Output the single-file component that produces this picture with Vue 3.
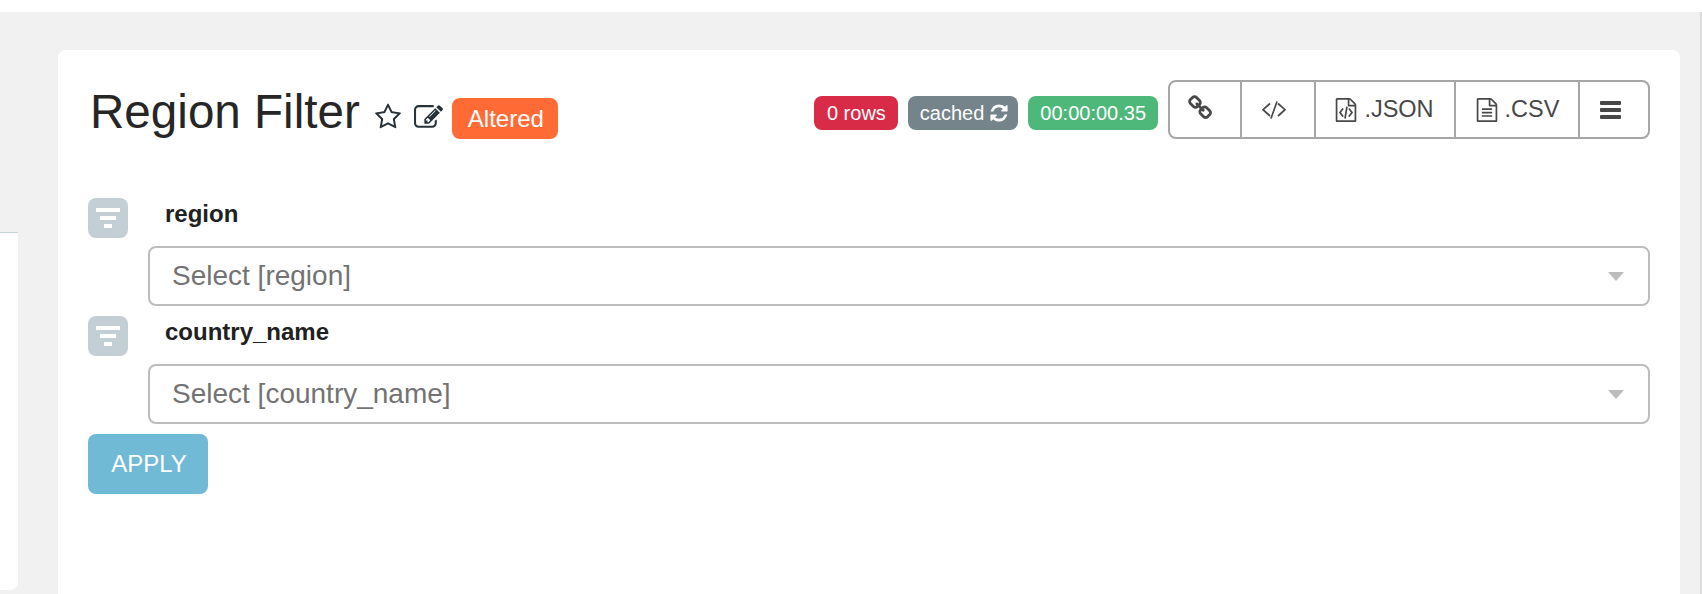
<script setup>
const filters = [
  { name: 'region', placeholder: 'Select [region]' },
  { name: 'country_name', placeholder: 'Select [country_name]' },
]
const icons = {
  star: 'M1201 1004l306-297-422-62-189-382-189 382-422 62 306 297-73 421 378-199 377 199zm527-357q0 22-26 48l-363 354 86 500q1 7 1 20 0 50-41 50-19 0-40-12l-449-236-449 236q-22 12-40 12-21 0-31.5-14.5t-10.5-35.5q0-6 2-20l86-500-364-354q-25-27-25-48 0-37 56-46l502-73 225-455q19-41 49-41t49 41l225 455 502 73q56 9 56 46z',
  edit: 'M888 1184l116-116-152-152-116 116v56h96v96h56zm440-720q-16-16-33 1l-350 350q-17 17-1 33t33-1l350-350q17-17 1-33zm80 594v190q0 119-84.5 203.5t-203.5 84.5h-832q-119 0-203.5-84.5t-84.5-203.5v-832q0-119 84.5-203.5t203.5-84.5h832q63 0 117 25 15 7 18 23 3 17-9 29l-49 49q-14 14-32 8-23-6-45-6h-832q-66 0-113 47t-47 113v832q0 66 47 113t113 47h832q66 0 113-47t47-113v-126q0-13 9-22l64-64q15-15 35-7t20 29zm-96-738l288 288-672 672h-288v-288zm444 132l-92 92-288-288 92-92q28-28 68-28t68 28l152 152q28 28 28 68t-28 68z',
  refresh: 'M1639 1056q0 5-1 7-64 268-268 434.5t-478 166.5q-146 0-282.5-55t-243.5-157l-129 129q-19 19-45 19t-45-19-19-45v-448q0-26 19-45t45-19h448q26 0 45 19t19 45-19 45l-137 137q71 66 161 102t187 36q134 0 250-65t186-179q11-17 53-117 8-23 30-23h192q13 0 22.5 9.5t9.5 22.5zm25-800v448q0 26-19 45t-45 19h-448q-26 0-45-19t-19-45 19-45l138-138q-148-137-349-137-134 0-250 65t-186 179q-11 17-53 117-8 23-30 23h-199q-13 0-22.5-9.5t-9.5-22.5v-7q65-268 270-434.5t480-166.5q146 0 284 55.5t245 156.5l130-129q19-19 45-19t45 19 19 45z',
  link: 'M1456 1216q0-40-28-68l-208-208q-28-28-68-28-42 0-72 32 3 3 19 18.5t21.5 21.5 15 19 13 25.5 3.5 27.5q0 40-28 68t-68 28q-15 0-27.5-3.5t-25.5-13-19-15-21.5-21.5-18.5-19q-33 31-33 73 0 40 28 68l206 207q27 27 68 27 40 0 68-26l147-146q28-28 28-67zm-703-705q0-40-28-68l-206-207q-28-28-68-28-39 0-68 27l-147 146q-28 28-28 67 0 40 28 68l208 208q27 27 68 27 42 0 72-31-3-3-19-18.5t-21.5-21.5-15-19-13-25.5-3.5-27.5q0-40 28-68t68-28q15 0 27.5 3.5t25.5 13 19 15 21.5 21.5 18.5 19q33-31 33-73zm895 705q0 120-85 203l-147 146q-83 83-203 83-121 0-204-85l-206-207q-83-83-83-203 0-123 88-209l-88-88q-86 88-208 88-120 0-204-84l-208-208q-84-84-84-204t85-203l147-146q83-83 203-83 121 0 204 85l206 207q83 83 83 203 0 123-88 209l88 88q86-88 208-88 120 0 204 84l208 208q84 84 84 204z',
  fileCode: 'M1596 380q28 28 48 76t20 88v1152q0 40-28 68t-68 28h-1344q-40 0-68-28t-28-68v-1600q0-40 28-68t68-28h896q40 0 88 20t76 48zm-444-244v376h376q-10-29-22-41l-313-313q-12-12-41-22zm384 1528v-1024h-416q-40 0-68-28t-28-68v-416h-768v1536h1280zm-928-896q8-11 21-12.5t24 6.5l51 38q11 8 12.5 21t-6.5 24l-182 243 182 243q8 11 6.5 24t-12.5 21l-51 38q-11 8-24 6.5t-21-12.5l-226-301q-14-19 0-38zm802 301q14 19 0 38l-226 301q-8 11-21 12.5t-24-6.5l-51-38q-11-8-12.5-21t6.5-24l182-243-182-243q-8-11-6.5-24t12.5-21l51-38q11-8 24-6.5t21 12.5zm-620 461q-13-2-20.5-13t-5.5-24l138-831q2-13 13-20.5t24-5.5l63 10q13 2 20.5 13t5.5 24l-138 831q-2 13-13 20.5t-24 5.5z',
  fileText: 'M1596 380q28 28 48 76t20 88v1152q0 40-28 68t-68 28h-1344q-40 0-68-28t-28-68v-1600q0-40 28-68t68-28h896q40 0 88 20t76 48zm-444-244v376h376q-10-29-22-41l-313-313q-12-12-41-22zm384 1528v-1024h-416q-40 0-68-28t-28-68v-416h-768v1536h1280zm-1024-864q0-14 9-23t23-9h704q14 0 23 9t9 23v64q0 14-9 23t-23 9h-704q-14 0-23-9t-9-23v-64zm736 224q14 0 23 9t9 23v64q0 14-9 23t-23 9h-704q-14 0-23-9t-9-23v-64q0-14 9-23t23-9h704zm0 256q14 0 23 9t9 23v64q0 14-9 23t-23 9h-704q-14 0-23-9t-9-23v-64q0-14 9-23t23-9h704z',
}
</script>

<template>
  <div class="page">
    <div class="side"></div>
    <main class="card">
      <header class="head">
        <div class="head-left">
          <h1 class="title">Region Filter</h1>
          <svg class="ic-star" viewBox="0 0 1792 1792"><path :d="icons.star" /></svg>
          <svg class="ic-edit" viewBox="0 0 1792 1792"><path :d="icons.edit" /></svg>
          <span class="altered">Altered</span>
        </div>
        <div class="head-right">
          <span class="badge red">0 rows</span>
          <span class="badge grey">cached <svg class="ic-refresh" viewBox="0 0 1792 1792"><path :d="icons.refresh" /></svg></span>
          <span class="badge green">00:00:00.35</span>
          <div class="btns">
            <div class="btn"><svg class="ic-link" viewBox="0 0 1792 1792"><path :d="icons.link" /></svg></div>
            <div class="btn"><svg class="ic-code" viewBox="0 0 24 18"><path d="M8 2.500 1 8.700l7 6.300M16 2.500l7 6.200-7 6.300M15 .5 9 17.500" /></svg></div>
            <div class="btn shift"><svg class="ic-file" viewBox="0 0 1792 1792"><path :d="icons.fileCode" /></svg>.JSON</div>
            <div class="btn"><svg class="ic-file" viewBox="0 0 1792 1792"><path :d="icons.fileText" /></svg>.CSV</div>
            <div class="btn"><span class="bars"><i></i><i></i><i></i></span></div>
          </div>
        </div>
      </header>
      <section class="filters">
        <div v-for="f in filters" :key="f.name" class="row">
          <div class="funnel"><i></i><i></i><i></i></div>
          <div class="field">
            <label class="label">{{ f.name }}</label>
            <div class="select">
              <span>{{ f.placeholder }}</span>
              <b class="caret"></b>
            </div>
          </div>
        </div>
        <button class="apply">APPLY</button>
      </section>
    </main>
  </div>
</template>

<style scoped>
.page {
  height: 582px;
  margin-top: 12px;
  background: #f1f1f1;
  display: flex;
  overflow: hidden;
  border-right: 2px solid #dcdcdc;
  font-family: "Liberation Sans", Arial, sans-serif;
}
.side {
  width: 18px;
  height: 358px;
  margin-top: 220px;
  margin-right: 40px;
  flex: none;
  background: #fff;
  border-top: 1px solid #c4d4d4;
  border-bottom-right-radius: 8px;
  box-sizing: border-box;
}
.card {
  width: 1622px;
  flex: none;
  margin-top: 38px;
  padding: 30px 30px 0;
  box-sizing: border-box;
  background: #fff;
  border-radius: 8px 8px 0 0;
}
.head {
  display: flex;
  justify-content: space-between;
  align-items: flex-start;
  height: 59px;
}
.head-left {
  display: flex;
  align-items: center;
  margin-top: 4px;
}
.title {
  margin: 0 0 4px 2px;
  font-size: 47.6px;
  font-weight: 400;
  line-height: 56px;
  color: #262626;
}
svg path { fill: currentColor; }
.ic-star {
  width: 28px;
  height: 28px;
  margin-left: 14px;
  color: #263238;
  margin-top: 6px;
}
.ic-edit {
  width: 29px;
  height: 29px;
  margin-left: 12px;
  color: #263238;
  margin-top: 6px;
}
.altered {
  margin-left: 9px;
  height: 41px;
  line-height: 41px;
  margin-top: 8px;
  padding: 0 16px;
  box-sizing: border-box;
  width: 106px;
  border-radius: 8px;
  background: #ff6a35;
  color: #fff;
  font-size: 24px;
}
.head-right {
  display: flex;
  align-items: flex-start;
}
.badge {
  height: 34px;
  margin-top: 16px;
  margin-right: 10px;
  padding: 0 12px;
  display: inline-flex;
  align-items: center;
  gap: 5px;
  border-radius: 8px;
  color: #fff;
  font-size: 20px;
  white-space: nowrap;
}
.red { background: #d72b47; padding: 0 12px 0 13px; }
.grey { background: #75838a; padding: 0 9px 0 12px; }
.green { background: #4db87a; }
.ic-refresh { width: 20px; height: 20px; }
.btns {
  width: 482px;
  height: 59px;
  display: grid;
  grid-template-columns: 72px 74px 140px 124px 1fr;
  box-sizing: border-box;
  border: 2px solid #a6a6a6;
  border-radius: 8px;
  color: #484848;
  font-size: 23.5px;
}
.btn {
  display: flex;
  align-items: center;
  justify-content: center;
  gap: 6px;
  border-right: 2px solid #a6a6a6;
}
.btn.shift { padding-right: 2px; }
.btn:last-child { border-right: 0; }
.ic-link { width: 26px; height: 26px; margin: -4px 8px 0 0; }
.ic-code { width: 24px; height: 18px; margin-right: 8px; }
.ic-code path { fill: none; stroke: currentColor; stroke-width: 1.7; }
.ic-file { width: 24px; height: 24px; }
.bars { width: 21px; display: flex; flex-direction: column; gap: 3px; margin-right: 7px; }
.bars i { display: block; height: 4px; border-radius: 1px; background: #484848; }
.filters { margin-top: 0; padding-top: 59px; }
.row { display: flex; margin-bottom: 10px; }
.funnel {
  width: 40px;
  height: 40px;
  flex: none;
  margin-right: 20px;
  border-radius: 8px;
  background: #c3cfd4;
  display: flex;
  flex-direction: column;
  align-items: center;
  padding-top: 10px;
  box-sizing: border-box;
  gap: 4px;
}
.funnel i { display: block; height: 4px; background: #fff; }
.funnel i:nth-child(1) { width: 24px; }
.funnel i:nth-child(2) { width: 16px; }
.funnel i:nth-child(3) { width: 8px; }
.field { flex: 1; min-width: 0; }
.label {
  display: block;
  height: 48px;
  line-height: 32px;
  padding-left: 17px;
  font-size: 24px;
  font-weight: 700;
  color: #212121;
}
.select {
  height: 60px;
  box-sizing: border-box;
  border: 2px solid #bdbdbd;
  border-radius: 8px;
  display: flex;
  align-items: center;
  justify-content: space-between;
  padding: 0 24px 0 22px;
  color: #737373;
  font-size: 28px;
  background: #fff;
}
.caret {
  width: 0;
  height: 0;
  border-style: solid;
  border-width: 9px 8px 0;
  border-color: #bdbdbd transparent transparent;
}
.apply {
  display: block;
  width: 120px;
  height: 60px;
  padding: 0 0 0 2px;
  border: 0;
  border-radius: 8px;
  background: #70bad5;
  color: #fff;
  font-family: inherit;
  font-size: 24px;
}
</style>
